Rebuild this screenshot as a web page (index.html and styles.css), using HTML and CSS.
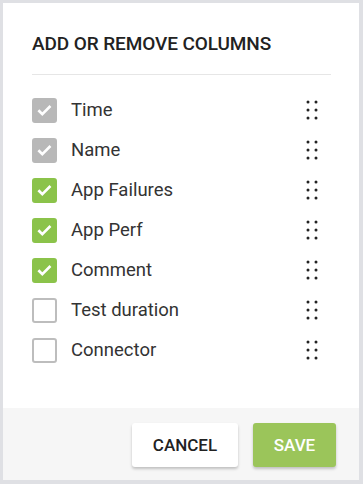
FILE: index.html
```html
<!DOCTYPE html>
<html>
<head>
<meta charset="utf-8">
<link rel="stylesheet" href="styles.css">
</head>
<body>
<div class="panel">
  <div class="content">
    <h2 class="title">ADD OR REMOVE COLUMNS</h2>
    <ul class="list">
      <li class="row"><span class="box disabled"><svg viewBox="0 0 24 24"><path d="M5 12.3l4.5 4.5 9.3-9.4"/></svg></span><span class="label">Time</span><svg class="handle" viewBox="0 0 12 20"><circle cx="2" cy="2" r="1.5"/><circle cx="10" cy="2" r="1.5"/><circle cx="2" cy="10" r="1.5"/><circle cx="10" cy="10" r="1.5"/><circle cx="2" cy="18" r="1.5"/><circle cx="10" cy="18" r="1.5"/></svg></li>
      <li class="row"><span class="box disabled"><svg viewBox="0 0 24 24"><path d="M5 12.3l4.5 4.5 9.3-9.4"/></svg></span><span class="label">Name</span><svg class="handle" viewBox="0 0 12 20"><circle cx="2" cy="2" r="1.5"/><circle cx="10" cy="2" r="1.5"/><circle cx="2" cy="10" r="1.5"/><circle cx="10" cy="10" r="1.5"/><circle cx="2" cy="18" r="1.5"/><circle cx="10" cy="18" r="1.5"/></svg></li>
      <li class="row"><span class="box checked"><svg viewBox="0 0 24 24"><path d="M5 12.3l4.5 4.5 9.3-9.4"/></svg></span><span class="label">App Failures</span><svg class="handle" viewBox="0 0 12 20"><circle cx="2" cy="2" r="1.5"/><circle cx="10" cy="2" r="1.5"/><circle cx="2" cy="10" r="1.5"/><circle cx="10" cy="10" r="1.5"/><circle cx="2" cy="18" r="1.5"/><circle cx="10" cy="18" r="1.5"/></svg></li>
      <li class="row"><span class="box checked"><svg viewBox="0 0 24 24"><path d="M5 12.3l4.5 4.5 9.3-9.4"/></svg></span><span class="label">App Perf</span><svg class="handle" viewBox="0 0 12 20"><circle cx="2" cy="2" r="1.5"/><circle cx="10" cy="2" r="1.5"/><circle cx="2" cy="10" r="1.5"/><circle cx="10" cy="10" r="1.5"/><circle cx="2" cy="18" r="1.5"/><circle cx="10" cy="18" r="1.5"/></svg></li>
      <li class="row"><span class="box checked"><svg viewBox="0 0 24 24"><path d="M5 12.3l4.5 4.5 9.3-9.4"/></svg></span><span class="label">Comment</span><svg class="handle" viewBox="0 0 12 20"><circle cx="2" cy="2" r="1.5"/><circle cx="10" cy="2" r="1.5"/><circle cx="2" cy="10" r="1.5"/><circle cx="10" cy="10" r="1.5"/><circle cx="2" cy="18" r="1.5"/><circle cx="10" cy="18" r="1.5"/></svg></li>
      <li class="row"><span class="box"></span><span class="label">Test duration</span><svg class="handle" viewBox="0 0 12 20"><circle cx="2" cy="2" r="1.5"/><circle cx="10" cy="2" r="1.5"/><circle cx="2" cy="10" r="1.5"/><circle cx="10" cy="10" r="1.5"/><circle cx="2" cy="18" r="1.5"/><circle cx="10" cy="18" r="1.5"/></svg></li>
      <li class="row"><span class="box"></span><span class="label">Connector</span><svg class="handle" viewBox="0 0 12 20"><circle cx="2" cy="2" r="1.5"/><circle cx="10" cy="2" r="1.5"/><circle cx="2" cy="10" r="1.5"/><circle cx="10" cy="10" r="1.5"/><circle cx="2" cy="18" r="1.5"/><circle cx="10" cy="18" r="1.5"/></svg></li>
    </ul>
  </div>
  <div class="footer">
    <button class="btn cancel">CANCEL</button>
    <button class="btn save">SAVE</button>
  </div>
</div>
</body>
</html>
```
FILE: styles.css
```css
html, body {
  margin: 0;
  padding: 0;
  background: #dfe0e4;
  height: 100%;
}
body {
  font-family: Roboto, "Liberation Sans", sans-serif;
  padding: 3px 4px 4px 3px;
  box-sizing: border-box;
}
.panel {
  background: #fff;
  height: 100%;
  display: flex;
  flex-direction: column;
}
.content {
  flex: 1;
  padding: 30px 28px 0 29px;
}
.title {
  margin: 0;
  font-size: 19px;
  font-weight: 500;
  color: #222;
  line-height: 22px;
  padding-bottom: 19px;
  border-bottom: 1px solid #e6e6e6;
  letter-spacing: -0.1px;
}
.list {
  list-style: none;
  margin: 15px 0 0 0;
  padding: 0;
}
.row {
  height: 40px;
  display: flex;
  align-items: center;
}
.box {
  width: 25px;
  height: 25px;
  box-sizing: border-box;
  border-radius: 3px;
  border: 2px solid #bdbdbd;
  background: #fff;
  display: flex;
  align-items: center;
  justify-content: center;
  flex: none;
}
.box.disabled {
  background: #b8b8b8;
  border-color: #b8b8b8;
}
.box.checked {
  background: #8bc34a;
  border-color: #8bc34a;
}
.box svg {
  width: 22px;
  height: 22px;
  fill: none;
  stroke: #fff;
  stroke-width: 3;
}
.label {
  flex: 1;
  margin-left: 14px;
  font-size: 18.5px;
  color: #333;
}
.handle {
  width: 12px;
  height: 20px;
  fill: #222;
  margin-right: 13px;
}
.footer {
  background: #f6f6f6;
  height: 72px;
  box-sizing: border-box;
  padding: 15px 23px 0 0;
  display: flex;
  justify-content: flex-end;
  gap: 15px;
}
.btn {
  height: 44px;
  border: none;
  border-radius: 3px;
  font-family: Roboto, "Liberation Sans", sans-serif;
  font-size: 17px;
  font-weight: 500;
  padding: 0;
  box-shadow: 0 2px 3px rgba(0,0,0,0.22);
  cursor: pointer;
}
.cancel {
  background: #fff;
  color: #222;
  width: 106px;
}
.save {
  background: #9bc55a;
  color: #fff;
  width: 83px;
}
```
